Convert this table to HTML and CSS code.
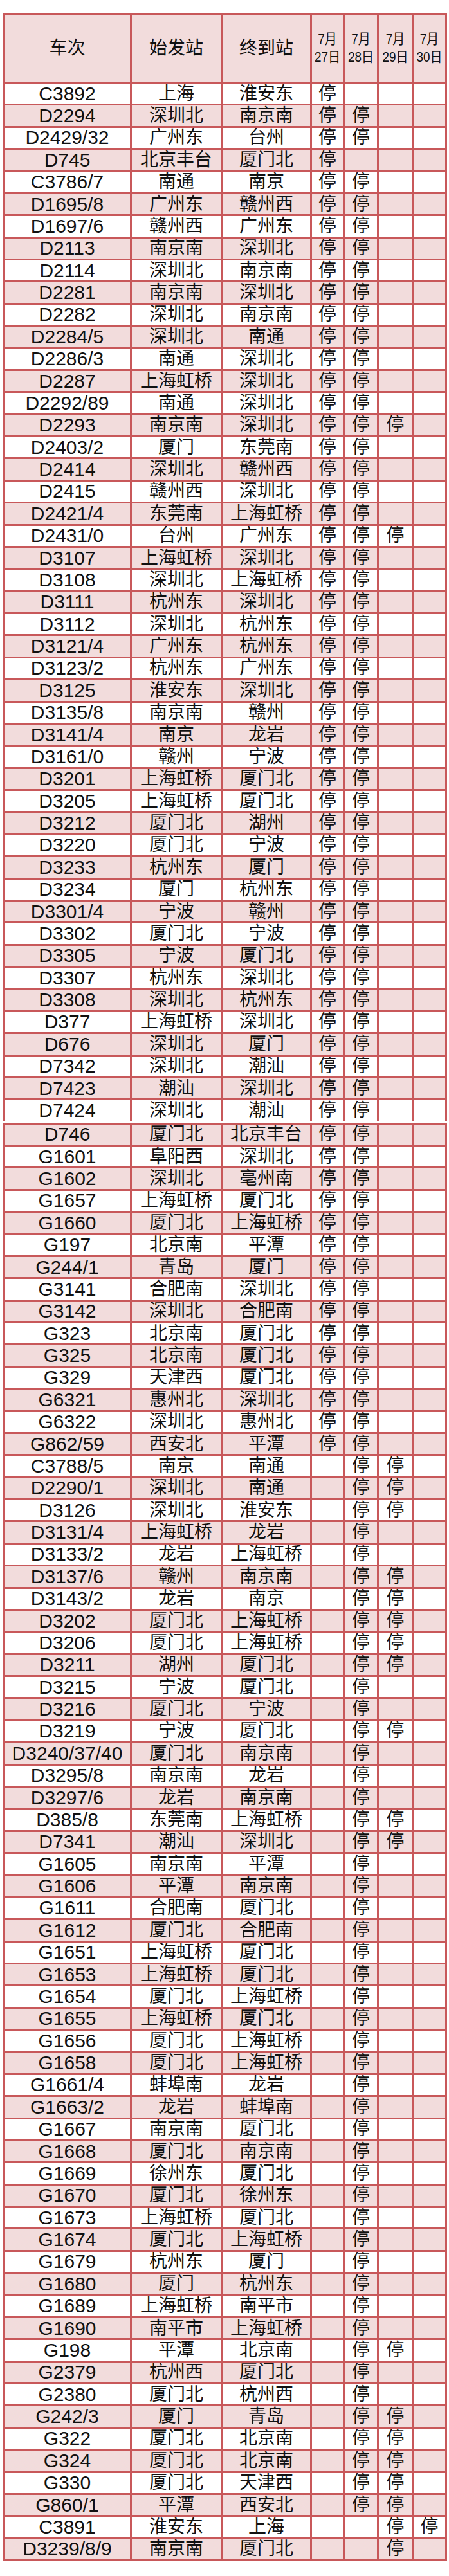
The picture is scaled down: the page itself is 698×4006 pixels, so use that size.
FILE: index.html
```html
<!DOCTYPE html>
<html lang="zh-CN">
<head>
<meta charset="utf-8">
<title>停运车次表</title>
<link rel="stylesheet" href="styles.css">
</head>
<body>
<div class="page">
<table class="sched">
<colgroup>
<col class="c1"><col class="c2"><col class="c3"><col class="c4"><col class="c5"><col class="c6"><col class="c7">
</colgroup>
<thead>
<tr class="head">
<th>车次</th><th>始发站</th><th>终到站</th>
<th class="d"><span class="dl">7月</span><span class="dl">27日</span></th>
<th class="d"><span class="dl">7月</span><span class="dl">28日</span></th>
<th class="d"><span class="dl">7月</span><span class="dl">29日</span></th>
<th class="d"><span class="dl">7月</span><span class="dl">30日</span></th>
</tr>
</thead>
<tbody class="b1">
<tr><td>C3892</td><td>上海</td><td>淮安东</td><td>停</td><td></td><td></td><td></td></tr>
<tr><td>D2294</td><td>深圳北</td><td>南京南</td><td>停</td><td>停</td><td></td><td></td></tr>
<tr><td>D2429/32</td><td>广州东</td><td>台州</td><td>停</td><td>停</td><td></td><td></td></tr>
<tr><td>D745</td><td>北京丰台</td><td>厦门北</td><td>停</td><td></td><td></td><td></td></tr>
<tr><td>C3786/7</td><td>南通</td><td>南京</td><td>停</td><td>停</td><td></td><td></td></tr>
<tr><td>D1695/8</td><td>广州东</td><td>赣州西</td><td>停</td><td>停</td><td></td><td></td></tr>
<tr><td>D1697/6</td><td>赣州西</td><td>广州东</td><td>停</td><td>停</td><td></td><td></td></tr>
<tr><td>D2113</td><td>南京南</td><td>深圳北</td><td>停</td><td>停</td><td></td><td></td></tr>
<tr><td>D2114</td><td>深圳北</td><td>南京南</td><td>停</td><td>停</td><td></td><td></td></tr>
<tr><td>D2281</td><td>南京南</td><td>深圳北</td><td>停</td><td>停</td><td></td><td></td></tr>
<tr><td>D2282</td><td>深圳北</td><td>南京南</td><td>停</td><td>停</td><td></td><td></td></tr>
<tr><td>D2284/5</td><td>深圳北</td><td>南通</td><td>停</td><td>停</td><td></td><td></td></tr>
<tr><td>D2286/3</td><td>南通</td><td>深圳北</td><td>停</td><td>停</td><td></td><td></td></tr>
<tr><td>D2287</td><td>上海虹桥</td><td>深圳北</td><td>停</td><td>停</td><td></td><td></td></tr>
<tr><td>D2292/89</td><td>南通</td><td>深圳北</td><td>停</td><td>停</td><td></td><td></td></tr>
<tr><td>D2293</td><td>南京南</td><td>深圳北</td><td>停</td><td>停</td><td>停</td><td></td></tr>
<tr><td>D2403/2</td><td>厦门</td><td>东莞南</td><td>停</td><td>停</td><td></td><td></td></tr>
<tr><td>D2414</td><td>深圳北</td><td>赣州西</td><td>停</td><td>停</td><td></td><td></td></tr>
<tr><td>D2415</td><td>赣州西</td><td>深圳北</td><td>停</td><td>停</td><td></td><td></td></tr>
<tr><td>D2421/4</td><td>东莞南</td><td>上海虹桥</td><td>停</td><td>停</td><td></td><td></td></tr>
<tr><td>D2431/0</td><td>台州</td><td>广州东</td><td>停</td><td>停</td><td>停</td><td></td></tr>
<tr><td>D3107</td><td>上海虹桥</td><td>深圳北</td><td>停</td><td>停</td><td></td><td></td></tr>
<tr><td>D3108</td><td>深圳北</td><td>上海虹桥</td><td>停</td><td>停</td><td></td><td></td></tr>
<tr><td>D3111</td><td>杭州东</td><td>深圳北</td><td>停</td><td>停</td><td></td><td></td></tr>
<tr><td>D3112</td><td>深圳北</td><td>杭州东</td><td>停</td><td>停</td><td></td><td></td></tr>
<tr><td>D3121/4</td><td>广州东</td><td>杭州东</td><td>停</td><td>停</td><td></td><td></td></tr>
<tr><td>D3123/2</td><td>杭州东</td><td>广州东</td><td>停</td><td>停</td><td></td><td></td></tr>
<tr><td>D3125</td><td>淮安东</td><td>深圳北</td><td>停</td><td>停</td><td></td><td></td></tr>
<tr><td>D3135/8</td><td>南京南</td><td>赣州</td><td>停</td><td>停</td><td></td><td></td></tr>
<tr><td>D3141/4</td><td>南京</td><td>龙岩</td><td>停</td><td>停</td><td></td><td></td></tr>
<tr><td>D3161/0</td><td>赣州</td><td>宁波</td><td>停</td><td>停</td><td></td><td></td></tr>
<tr><td>D3201</td><td>上海虹桥</td><td>厦门北</td><td>停</td><td>停</td><td></td><td></td></tr>
<tr><td>D3205</td><td>上海虹桥</td><td>厦门北</td><td>停</td><td>停</td><td></td><td></td></tr>
<tr><td>D3212</td><td>厦门北</td><td>湖州</td><td>停</td><td>停</td><td></td><td></td></tr>
<tr><td>D3220</td><td>厦门北</td><td>宁波</td><td>停</td><td>停</td><td></td><td></td></tr>
<tr><td>D3233</td><td>杭州东</td><td>厦门</td><td>停</td><td>停</td><td></td><td></td></tr>
<tr><td>D3234</td><td>厦门</td><td>杭州东</td><td>停</td><td>停</td><td></td><td></td></tr>
<tr><td>D3301/4</td><td>宁波</td><td>赣州</td><td>停</td><td>停</td><td></td><td></td></tr>
<tr><td>D3302</td><td>厦门北</td><td>宁波</td><td>停</td><td>停</td><td></td><td></td></tr>
<tr><td>D3305</td><td>宁波</td><td>厦门北</td><td>停</td><td>停</td><td></td><td></td></tr>
<tr><td>D3307</td><td>杭州东</td><td>深圳北</td><td>停</td><td>停</td><td></td><td></td></tr>
<tr><td>D3308</td><td>深圳北</td><td>杭州东</td><td>停</td><td>停</td><td></td><td></td></tr>
<tr><td>D377</td><td>上海虹桥</td><td>深圳北</td><td>停</td><td>停</td><td></td><td></td></tr>
<tr><td>D676</td><td>深圳北</td><td>厦门</td><td>停</td><td>停</td><td></td><td></td></tr>
<tr><td>D7342</td><td>深圳北</td><td>潮汕</td><td>停</td><td>停</td><td></td><td></td></tr>
<tr><td>D7423</td><td>潮汕</td><td>深圳北</td><td>停</td><td>停</td><td></td><td></td></tr>
<tr class="cut"><td>D7424</td><td>深圳北</td><td>潮汕</td><td>停</td><td>停</td><td></td><td></td></tr>
</tbody>
<tbody class="seam">
<tr><td colspan="7"></td></tr>
</tbody>
<tbody class="b2">
<tr><td>D746</td><td>厦门北</td><td>北京丰台</td><td>停</td><td>停</td><td></td><td></td></tr>
<tr><td>G1601</td><td>阜阳西</td><td>深圳北</td><td>停</td><td>停</td><td></td><td></td></tr>
<tr><td>G1602</td><td>深圳北</td><td>亳州南</td><td>停</td><td>停</td><td></td><td></td></tr>
<tr><td>G1657</td><td>上海虹桥</td><td>厦门北</td><td>停</td><td>停</td><td></td><td></td></tr>
<tr><td>G1660</td><td>厦门北</td><td>上海虹桥</td><td>停</td><td>停</td><td></td><td></td></tr>
<tr><td>G197</td><td>北京南</td><td>平潭</td><td>停</td><td>停</td><td></td><td></td></tr>
<tr><td>G244/1</td><td>青岛</td><td>厦门</td><td>停</td><td>停</td><td></td><td></td></tr>
<tr><td>G3141</td><td>合肥南</td><td>深圳北</td><td>停</td><td>停</td><td></td><td></td></tr>
<tr><td>G3142</td><td>深圳北</td><td>合肥南</td><td>停</td><td>停</td><td></td><td></td></tr>
<tr><td>G323</td><td>北京南</td><td>厦门北</td><td>停</td><td>停</td><td></td><td></td></tr>
<tr><td>G325</td><td>北京南</td><td>厦门北</td><td>停</td><td>停</td><td></td><td></td></tr>
<tr><td>G329</td><td>天津西</td><td>厦门北</td><td>停</td><td>停</td><td></td><td></td></tr>
<tr><td>G6321</td><td>惠州北</td><td>深圳北</td><td>停</td><td>停</td><td></td><td></td></tr>
<tr><td>G6322</td><td>深圳北</td><td>惠州北</td><td>停</td><td>停</td><td></td><td></td></tr>
<tr><td>G862/59</td><td>西安北</td><td>平潭</td><td>停</td><td>停</td><td></td><td></td></tr>
<tr><td>C3788/5</td><td>南京</td><td>南通</td><td></td><td>停</td><td>停</td><td></td></tr>
<tr><td>D2290/1</td><td>深圳北</td><td>南通</td><td></td><td>停</td><td>停</td><td></td></tr>
<tr><td>D3126</td><td>深圳北</td><td>淮安东</td><td></td><td>停</td><td>停</td><td></td></tr>
<tr><td>D3131/4</td><td>上海虹桥</td><td>龙岩</td><td></td><td>停</td><td></td><td></td></tr>
<tr><td>D3133/2</td><td>龙岩</td><td>上海虹桥</td><td></td><td>停</td><td></td><td></td></tr>
<tr><td>D3137/6</td><td>赣州</td><td>南京南</td><td></td><td>停</td><td>停</td><td></td></tr>
<tr><td>D3143/2</td><td>龙岩</td><td>南京</td><td></td><td>停</td><td>停</td><td></td></tr>
<tr><td>D3202</td><td>厦门北</td><td>上海虹桥</td><td></td><td>停</td><td>停</td><td></td></tr>
<tr><td>D3206</td><td>厦门北</td><td>上海虹桥</td><td></td><td>停</td><td>停</td><td></td></tr>
<tr><td>D3211</td><td>湖州</td><td>厦门北</td><td></td><td>停</td><td>停</td><td></td></tr>
<tr><td>D3215</td><td>宁波</td><td>厦门北</td><td></td><td>停</td><td></td><td></td></tr>
<tr><td>D3216</td><td>厦门北</td><td>宁波</td><td></td><td>停</td><td></td><td></td></tr>
<tr><td>D3219</td><td>宁波</td><td>厦门北</td><td></td><td>停</td><td>停</td><td></td></tr>
<tr><td>D3240/37/40</td><td>厦门北</td><td>南京南</td><td></td><td>停</td><td></td><td></td></tr>
<tr><td>D3295/8</td><td>南京南</td><td>龙岩</td><td></td><td>停</td><td></td><td></td></tr>
<tr><td>D3297/6</td><td>龙岩</td><td>南京南</td><td></td><td>停</td><td></td><td></td></tr>
<tr><td>D385/8</td><td>东莞南</td><td>上海虹桥</td><td></td><td>停</td><td>停</td><td></td></tr>
<tr><td>D7341</td><td>潮汕</td><td>深圳北</td><td></td><td>停</td><td>停</td><td></td></tr>
<tr><td>G1605</td><td>南京南</td><td>平潭</td><td></td><td>停</td><td></td><td></td></tr>
<tr><td>G1606</td><td>平潭</td><td>南京南</td><td></td><td>停</td><td></td><td></td></tr>
<tr><td>G1611</td><td>合肥南</td><td>厦门北</td><td></td><td>停</td><td></td><td></td></tr>
<tr><td>G1612</td><td>厦门北</td><td>合肥南</td><td></td><td>停</td><td></td><td></td></tr>
<tr><td>G1651</td><td>上海虹桥</td><td>厦门北</td><td></td><td>停</td><td></td><td></td></tr>
<tr><td>G1653</td><td>上海虹桥</td><td>厦门北</td><td></td><td>停</td><td></td><td></td></tr>
<tr><td>G1654</td><td>厦门北</td><td>上海虹桥</td><td></td><td>停</td><td></td><td></td></tr>
<tr><td>G1655</td><td>上海虹桥</td><td>厦门北</td><td></td><td>停</td><td></td><td></td></tr>
<tr><td>G1656</td><td>厦门北</td><td>上海虹桥</td><td></td><td>停</td><td></td><td></td></tr>
<tr><td>G1658</td><td>厦门北</td><td>上海虹桥</td><td></td><td>停</td><td></td><td></td></tr>
<tr><td>G1661/4</td><td>蚌埠南</td><td>龙岩</td><td></td><td>停</td><td></td><td></td></tr>
<tr><td>G1663/2</td><td>龙岩</td><td>蚌埠南</td><td></td><td>停</td><td></td><td></td></tr>
<tr><td>G1667</td><td>南京南</td><td>厦门北</td><td></td><td>停</td><td></td><td></td></tr>
<tr><td>G1668</td><td>厦门北</td><td>南京南</td><td></td><td>停</td><td></td><td></td></tr>
<tr><td>G1669</td><td>徐州东</td><td>厦门北</td><td></td><td>停</td><td></td><td></td></tr>
<tr><td>G1670</td><td>厦门北</td><td>徐州东</td><td></td><td>停</td><td></td><td></td></tr>
<tr><td>G1673</td><td>上海虹桥</td><td>厦门北</td><td></td><td>停</td><td></td><td></td></tr>
<tr><td>G1674</td><td>厦门北</td><td>上海虹桥</td><td></td><td>停</td><td></td><td></td></tr>
<tr><td>G1679</td><td>杭州东</td><td>厦门</td><td></td><td>停</td><td></td><td></td></tr>
<tr><td>G1680</td><td>厦门</td><td>杭州东</td><td></td><td>停</td><td></td><td></td></tr>
<tr><td>G1689</td><td>上海虹桥</td><td>南平市</td><td></td><td>停</td><td></td><td></td></tr>
<tr><td>G1690</td><td>南平市</td><td>上海虹桥</td><td></td><td>停</td><td></td><td></td></tr>
<tr><td>G198</td><td>平潭</td><td>北京南</td><td></td><td>停</td><td>停</td><td></td></tr>
<tr><td>G2379</td><td>杭州西</td><td>厦门北</td><td></td><td>停</td><td></td><td></td></tr>
<tr><td>G2380</td><td>厦门北</td><td>杭州西</td><td></td><td>停</td><td></td><td></td></tr>
<tr><td>G242/3</td><td>厦门</td><td>青岛</td><td></td><td>停</td><td>停</td><td></td></tr>
<tr><td>G322</td><td>厦门北</td><td>北京南</td><td></td><td>停</td><td>停</td><td></td></tr>
<tr><td>G324</td><td>厦门北</td><td>北京南</td><td></td><td>停</td><td>停</td><td></td></tr>
<tr><td>G330</td><td>厦门北</td><td>天津西</td><td></td><td>停</td><td>停</td><td></td></tr>
<tr><td>G860/1</td><td>平潭</td><td>西安北</td><td></td><td>停</td><td>停</td><td></td></tr>
<tr><td>C3891</td><td>淮安东</td><td>上海</td><td></td><td></td><td>停</td><td>停</td></tr>
<tr><td>D3239/8/9</td><td>南京南</td><td>厦门北</td><td></td><td></td><td>停</td><td></td></tr>
</tbody>
</table>
</div>
</body>
</html>
```
FILE: styles.css
```css
html, body {
  margin: 0;
  padding: 0;
  background: #ffffff;
}

.page {
  padding: 20px 0 0 4px;
}

.sched {
  table-layout: fixed;
  border-collapse: separate;
  border-spacing: 0;
  width: 691px;
  font-family: "Liberation Sans", "Noto Sans CJK SC", sans-serif;
  color: #111111;
}

.c1 { width: 201px; }
.c2 { width: 141px; }
.c3 { width: 139px; }
.c4 { width: 51px; }
.c5 { width: 53px; }
.c6 { width: 54px; }
.c7 { width: 52px; }

.sched th,
.sched td {
  box-sizing: border-box;
  padding: 0;
  text-align: center;
  vertical-align: middle;
  white-space: nowrap;
  overflow: hidden;
  border-right: 3px solid #c8585a;
  border-bottom: 3px solid #c8585a;
  font-size: 28px;
  font-weight: normal;
  line-height: 30px;
}

.sched th:first-child,
.sched td:first-child {
  border-left: 3px solid #c8585a;
}

.sched td:first-child {
  font-size: 30px;
}

.head th {
  border-top: 3px solid #c8585a;
  background: #f2dcdc;
}

.head {
  height: 110px;
}

.sched th.d {
  font-size: 22px;
  line-height: 28px;
}

.dl {
  display: block;
  transform: scaleX(0.86);
}

.b1 tr,
.b2 tr {
  height: 34.39px;
}

.b1 tr:nth-child(even) td,
.b2 tr:nth-child(odd) td {
  background: #f2dcdc;
}

.b1 tr.cut {
  height: 31.39px;
}

.b1 tr.cut td {
  border-bottom: none;
}

.seam tr {
  height: 6px;
}

.seam td,
.seam td:first-child {
  border-left: none;
  border-right: none;
  border-bottom: 3px solid #c8585a;
  background: #ffffff;
  line-height: 0;
  font-size: 0;
  height: 6px;
}
```
